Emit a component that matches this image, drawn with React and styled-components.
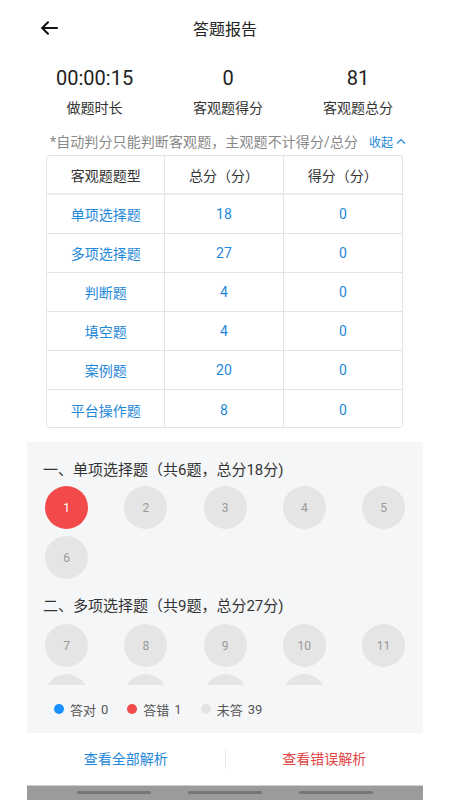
import React from "react";
import styled, { createGlobalStyle } from "styled-components";

const Global = createGlobalStyle`
  html, body { margin: 0; padding: 0; background: #fff; }
  body { font-family: Roboto, "Noto Sans CJK SC", "Noto Sans", sans-serif; }
  * { box-sizing: border-box; }
`;

const BLUE = "#1f88d9";
const RED = "#f24a4a";

const Page = styled.div`
  width: 450px;
  height: 800px;
  display: flex;
  flex-direction: column;
  overflow: hidden;
  background: #fff;
`;

const Header = styled.header`
  height: 56px;
  display: grid;
  grid-template-columns: 80px 1fr 80px;
  align-items: center;
  flex-shrink: 0;
`;

const BackButton = styled.button`
  border: 0;
  background: none;
  padding: 0 0 0 41px;
  height: 40px;
  display: flex;
  align-items: center;
  cursor: pointer;
`;

const Title = styled.h1`
  margin: 0;
  text-align: center;
  font-size: 16px;
  font-weight: 400;
  color: #222;
`;

const Stats = styled.div`
  display: flex;
  justify-content: space-between;
  padding: 10px 57px 0 56px;
`;

const Stat = styled.div`
  display: flex;
  flex-direction: column;
  align-items: center;
  gap: 8px;
`;

const StatValue = styled.div`
  font-size: 20px;
  line-height: 24px;
  color: #222;
`;

const StatLabel = styled.div`
  font-size: 14px;
  line-height: 20px;
  color: #333;
`;

const NoteRow = styled.div`
  display: flex;
  align-items: center;
  margin-top: 13px;
  padding-left: 50px;
  height: 20px;
`;

const NoteText = styled.span`
  font-size: 14px;
  color: #888;
  letter-spacing: 0.1px;
`;

const Toggle = styled.span`
  margin-left: 11px;
  display: inline-flex;
  align-items: center;
  gap: 3px;
  font-size: 12px;
  color: ${BLUE};
`;

const Table = styled.div`
  margin: 4px 47px 0 46px;
  display: grid;
  grid-template-columns: repeat(3, 1fr);
  border: 1px solid #e4e4e4;
  border-radius: 3px;
  overflow: hidden;
`;

const Cell = styled.div`
  height: 39px;
  display: flex;
  align-items: center;
  justify-content: center;
  font-size: 14px;
  color: ${(p) => (p.$head ? "#333" : BLUE)};
  border-right: ${(p) => (p.$last ? "0" : "1px solid #e4e4e4")};
  border-bottom: ${(p) => (p.$bottom ? "0" : p.$head ? "2px solid #ececec" : "1px solid #e4e4e4")};
`;

const Panel = styled.section`
  margin: 14px 27px 0;
  background: #f5f6f8;
  display: flex;
  flex-direction: column;
  flex-shrink: 0;
`;

const Scroll = styled.div`
  height: 243px;
  overflow: hidden;
  padding: 18px 18px 0;
`;

const Group = styled.div`
  & + & { margin-top: 17px; }
`;

const GroupTitle = styled.div`
  font-size: 15px;
  line-height: 20px;
  color: #333;
  margin-left: -2px;
`;

const Grid = styled.div`
  margin-top: ${(p) => p.$mt || 6}px;
  display: grid;
  grid-template-columns: repeat(5, 43px);
  justify-content: space-between;
  row-gap: 7px;
`;

const Bubble = styled.div`
  width: 43px;
  height: 43px;
  border-radius: 50%;
  display: flex;
  align-items: center;
  justify-content: center;
  font-size: 12px;
  background: ${(p) => (p.$state === "wrong" ? RED : p.$state === "right" ? "#1890ff" : "#e5e5e5")};
  color: ${(p) => (p.$state ? "#fff" : "#999")};
`;

const Legend = styled.div`
  height: 48px;
  display: flex;
  align-items: center;
  padding-left: 27px;
  gap: 19px;
`;

const LegendItem = styled.div`
  display: flex;
  align-items: center;
  gap: 6px;
  font-size: 13px;
  color: #555;
`;

const LegendCount = styled.span`
  margin-left: -1px;
`;

const Dot = styled.span`
  width: 10px;
  height: 10px;
  border-radius: 50%;
  background: ${(p) => p.$c};
`;

const Actions = styled.div`
  height: 52px;
  margin: 0 27px;
  display: flex;
  align-items: center;
  flex-shrink: 0;
`;

const Action = styled.button`
  flex: 1;
  border: 0;
  background: none;
  font-family: inherit;
  font-size: 14px;
  color: ${(p) => p.$c};
  cursor: pointer;
  padding: 0 0 3px;
`;

const Divider = styled.span`
  width: 1px;
  height: 20px;
  background: #eaeaea;
`;

const NavBar = styled.div`
  margin: 0 27px;
  height: 15px;
  background: #9b9b9b;
  border-top: 1px solid #cfcfcf;
  display: flex;
  justify-content: center;
  gap: 37px;
  padding-top: 5px;
  flex-shrink: 0;
`;

const NavLine = styled.span`
  width: 74px;
  height: 3px;
  border-radius: 2px;
  background: #767676;
`;

const rows = [
  ["单项选择题", 18, 0],
  ["多项选择题", 27, 0],
  ["判断题", 4, 0],
  ["填空题", 4, 0],
  ["案例题", 20, 0],
  ["平台操作题", 8, 0],
];

const groups = [
  { title: "一、单项选择题（共6题，总分18分)", from: 1, count: 6, mt: 6 },
  { title: "二、多项选择题（共9题，总分27分)", from: 7, count: 9, mt: 8 },
  { title: "三、判断题（共4题，总分4分)", from: 16, count: 4, mt: 8 },
];

export default function App() {
  return (
    <Page>
      <Global />
      <Header>
        <BackButton aria-label="返回">
          <svg width="17" height="14" viewBox="0 0 17 14" fill="none" stroke="#111" strokeWidth="2" strokeLinecap="round" strokeLinejoin="round">
            <path d="M16 7H1.5" />
            <path d="M7 1.2L1.2 7L7 12.8" />
          </svg>
        </BackButton>
        <Title>答题报告</Title>
        <span />
      </Header>

      <Stats>
        <Stat>
          <StatValue>00:00:15</StatValue>
          <StatLabel>做题时长</StatLabel>
        </Stat>
        <Stat>
          <StatValue>0</StatValue>
          <StatLabel>客观题得分</StatLabel>
        </Stat>
        <Stat>
          <StatValue>81</StatValue>
          <StatLabel>客观题总分</StatLabel>
        </Stat>
      </Stats>

      <NoteRow>
        <NoteText>*自动判分只能判断客观题，主观题不计得分/总分</NoteText>
        <Toggle>
          收起
          <svg width="10" height="6" viewBox="0 0 10 6" fill="none" stroke={BLUE} strokeWidth="1.2">
            <path d="M1 5.5L5 1.5L9 5.5" />
          </svg>
        </Toggle>
      </NoteRow>

      <Table>
        <Cell $head>客观题题型</Cell>
        <Cell $head>总分（分）</Cell>
        <Cell $head $last>得分（分）</Cell>
        {rows.map(([name, total, score], i) => {
          const bottom = i === rows.length - 1;
          return (
            <React.Fragment key={name}>
              <Cell $bottom={bottom}>{name}</Cell>
              <Cell $bottom={bottom}>{total}</Cell>
              <Cell $bottom={bottom} $last>{score}</Cell>
            </React.Fragment>
          );
        })}
      </Table>

      <Panel>
        <Scroll>
          {groups.map((g) => (
            <Group key={g.title}>
              <GroupTitle>{g.title}</GroupTitle>
              <Grid $mt={g.mt}>
                {Array.from({ length: g.count }, (_, k) => {
                  const n = g.from + k;
                  return (
                    <Bubble key={n} $state={n === 1 ? "wrong" : undefined}>
                      {n}
                    </Bubble>
                  );
                })}
              </Grid>
            </Group>
          ))}
        </Scroll>
        <Legend>
          <LegendItem>
            <Dot $c="#1890ff" />
            答对<LegendCount>0</LegendCount>
          </LegendItem>
          <LegendItem>
            <Dot $c={RED} />
            答错<LegendCount>1</LegendCount>
          </LegendItem>
          <LegendItem>
            <Dot $c="#e3e3e3" />
            未答<LegendCount>39</LegendCount>
          </LegendItem>
        </Legend>
      </Panel>

      <Actions>
        <Action $c={BLUE}>查看全部解析</Action>
        <Divider />
        <Action $c="#e04545">查看错误解析</Action>
      </Actions>

      <NavBar>
        <NavLine />
        <NavLine />
        <NavLine />
      </NavBar>
    </Page>
  );
}
